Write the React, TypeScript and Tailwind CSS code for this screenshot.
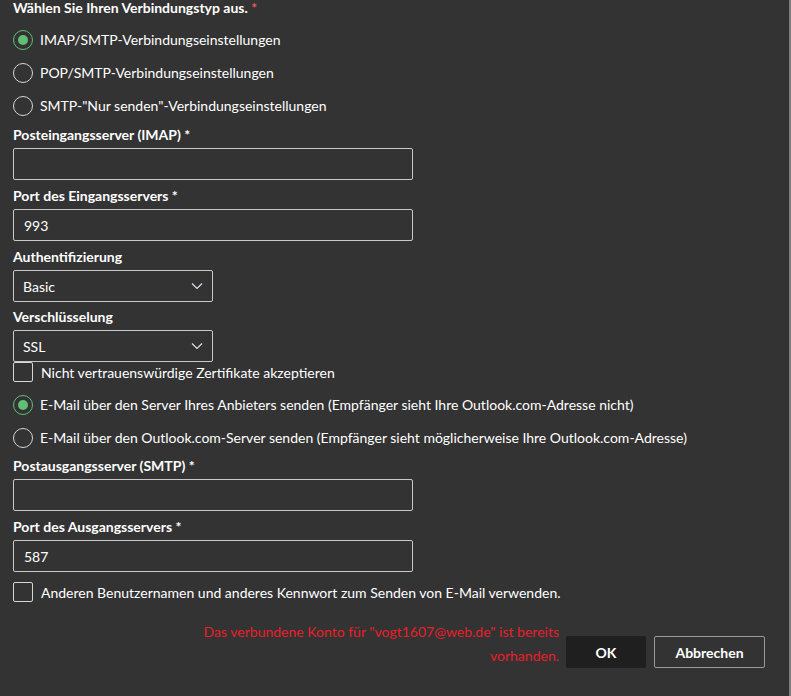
import React from "react";

const font = { fontFamily: "Lato, 'Open Sans', sans-serif" };

function Radio({ checked, label }: { checked?: boolean; label: string }) {
    return (
        <div className="flex h-[33px] items-center">
            <span
                className={`flex h-[20px] w-[20px] shrink-0 items-center justify-center rounded-full border ${checked ? "border-[#5fbf73]" : "border-[#d6d6d6]"
                    }`}
            >
                {checked && <span className="h-[10px] w-[10px] rounded-full bg-[#5fbf73]" />}
            </span>
            <span className="ml-[7px] text-[14px] text-white">{label}</span>
        </div>
    );
}

function Label({ text, className = "" }: { text: string; className?: string }) {
    return <div className={`h-[20px] text-[14px] font-bold leading-[20px] text-white ${className}`}>{text}</div>;
}

function TextInput({ value = "" }: { value?: string }) {
    return (
        <div className="mt-[3px] flex h-[32px] w-[400px] items-center rounded-[2px] border border-[#c9c9c9] px-[10px] text-[14px] text-white">
            {value}
        </div>
    );
}

function Select({ value }: { value: string }) {
    return (
        <div className="mt-[3px] flex h-[32px] w-[200px] items-center justify-between rounded-[2px] border border-[#c9c9c9] pl-[9px] pr-[9px] text-[14px] text-white">
            <span>{value}</span>
            <svg width="12" height="8" viewBox="0 0 12 8" fill="none">
                <path d="M1 1.5 6 6.5 11 1.5" stroke="#dfe6f0" strokeWidth="1.1" />
            </svg>
        </div>
    );
}

function Checkbox({ label }: { label: string }) {
    return (
        <div className="flex h-[20px] items-center">
            <span className="h-[20px] w-[20px] shrink-0 rounded-[2px] border border-[#d6d6d6]" />
            <span className="ml-[8px] text-[14px] text-white">{label}</span>
        </div>
    );
}

export default function App() {
    return (
        <div className="h-[696px] w-[791px] overflow-hidden bg-[#333333]" style={font}>
            <div className="h-full border-r-2 border-[#7c7c7c] pl-[13px]">
                {/* Connection type */}
                <div className="h-[16px] text-[14px] font-bold leading-[16px] text-white">
                    Wählen Sie Ihren Verbindungstyp aus. <span className="text-[#e35d5d]">*</span>
                </div>
                <div className="mt-[7px]">
                    <Radio checked label="IMAP/SMTP-Verbindungseinstellungen" />
                    <Radio label="POP/SMTP-Verbindungseinstellungen" />
                    <Radio label={'SMTP-"Nur senden"-Verbindungseinstellungen'} />
                </div>

                {/* Incoming */}
                <Label text="Posteingangsserver (IMAP) *" className="mt-[3px]" />
                <TextInput />
                <Label text="Port des Eingangsservers *" className="mt-[6px]" />
                <TextInput value="993" />

                <Label text="Authentifizierung" className="mt-[6px]" />
                <Select value="Basic" />
                <Label text="Verschlüsselung" className="mt-[5px]" />
                <Select value="SSL" />
                <Checkbox label="Nicht vertrauenswürdige Zertifikate akzeptieren" />

                <div className="mt-[6px]">
                    <Radio checked label="E-Mail über den Server Ihres Anbieters senden (Empfänger sieht Ihre Outlook.com-Adresse nicht)" />
                    <Radio label="E-Mail über den Outlook.com-Server senden (Empfänger sieht möglicherweise Ihre Outlook.com-Adresse)" />
                </div>

                {/* Outgoing */}
                <Label text="Postausgangsserver (SMTP) *" className="mt-[2px]" />
                <TextInput />
                <Label text="Port des Ausgangsservers *" className="mt-[6px]" />
                <TextInput value="587" />
                <div className="mt-[10px]">
                    <Checkbox label="Anderen Benutzernamen und anderes Kennwort zum Senden von E-Mail verwenden." />
                </div>

                {/* Footer */}
                <div className="mt-[18px] flex items-end justify-end pr-[24px]">
                    <div className="w-[360px] text-right text-[14px] leading-[24px] text-[#e81e2a]">
                        Das verbundene Konto für "vogt1607@web.de" ist bereits vorhanden.
                    </div>
                    <button className="ml-[7px] h-[32px] w-[80px] rounded-[2px] bg-[#1f1f1f] text-[14px] font-bold text-white">
                        OK
                    </button>
                    <button className="ml-[8px] h-[32px] w-[111px] rounded-[2px] border border-[#9a9a9a] text-[14px] font-bold text-white">
                        Abbrechen
                    </button>
                </div>
            </div>
        </div>
    );
}
